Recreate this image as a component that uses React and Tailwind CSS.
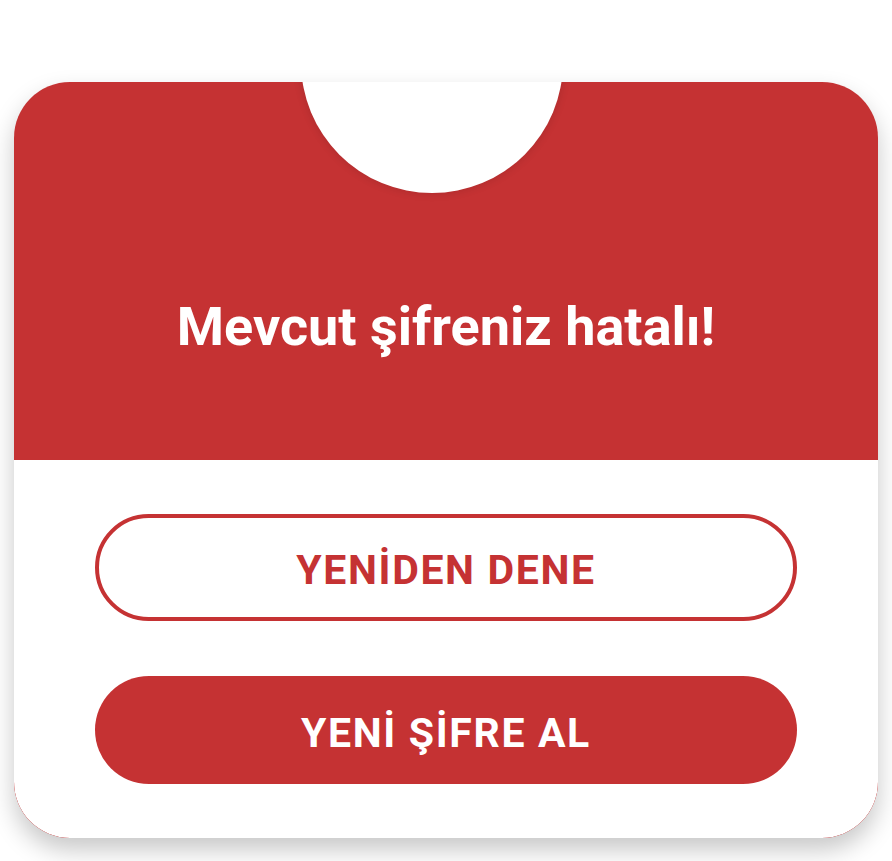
export default function App() {
  return (
    <div className="min-h-[861px] bg-white pt-[82px] px-[14px]" style={{ fontFamily: 'Roboto, "Liberation Sans", sans-serif' }}>
      <div className="relative overflow-hidden rounded-[56px] bg-[#c53233] shadow-[0_12px_24px_rgba(0,0,0,0.22)]">
        {/* header */}
        <div className="relative h-[378px] flex items-center justify-center pt-[112px]">
          <div className="absolute left-[287px] top-[-151px] h-[262px] w-[262px] rounded-full bg-white shadow-[0_0_10px_rgba(0,0,0,0.14)]"></div>
          <h1 className="text-[54px] font-bold text-white leading-none">Mevcut şifreniz hatalı!</h1>
        </div>
        {/* actions */}
        <div className="bg-white rounded-b-[56px] px-[81px] pt-[54px] pb-[54px] flex flex-col gap-[55px]">
          <button className="h-[107px] w-full rounded-full border-4 border-[#c53233] text-[#c53233] text-[41px] font-bold leading-none tracking-[0.04em] pt-[6px]">
            YENİDEN DENE
          </button>
          <button className="h-[108px] w-full rounded-full bg-[#c53233] text-white text-[41px] font-bold leading-none tracking-[0.04em] pt-[6px]">
            YENİ ŞİFRE AL
          </button>
        </div>
      </div>
    </div>
  );
}
